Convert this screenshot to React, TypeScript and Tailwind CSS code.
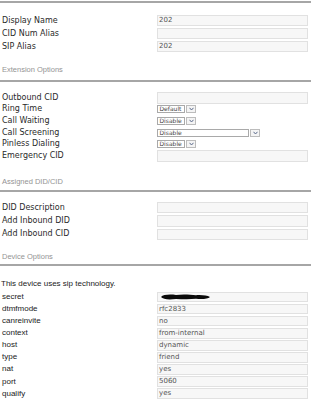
import React from 'react';

// Ligne de séparation grise
const Rule: React.FC<{ className?: string }> = ({ className = '' }) => (
  <div className={`h-[2px] bg-[#a6a6a6] ${className}`} />
);

const Header: React.FC<{ title: string; className: string; ruleClass: string }> = ({ title, className, ruleClass }) => (
  <div className={className}>
    <div className="pl-[2px] h-[10px] leading-[10px] text-[7.5px] text-[#949494] font-['Liberation_Sans',Arial,sans-serif]">
      {title}
    </div>
    <Rule className={ruleClass} />
  </div>
);

const TextBox: React.FC<{ value?: string; children?: React.ReactNode }> = ({ value, children }) => (
  <div className="flex items-center h-full w-[151px] border border-[#e1e1e1] bg-[#f7f7f7] pl-[1px] text-[7px] text-[#555] font-['DejaVu_Sans',Verdana,sans-serif]">
    {value}
    {children}
  </div>
);

const Select: React.FC<{ value: string; wide?: boolean }> = ({ value, wide }) => (
  <div className="flex items-center gap-[1px] h-[8px]">
    <div
      className={`flex items-center h-full overflow-hidden border border-[#a9a9a9] bg-white pl-[1.5px] text-[6px] leading-none text-[#444] font-['DejaVu_Sans',Verdana,sans-serif] ${
        wide ? 'w-[92px]' : 'w-[28px]'
      }`}
    >
      {value}
    </div>
    <div className="flex items-center justify-center h-full w-[10px] border border-[#bcbcbc] bg-[#f4f4f4]">
      <svg width="5" height="4" viewBox="0 0 5 4">
        <path d="M0.5 0.8 L2.5 3 L4.5 0.8" fill="none" stroke="#5a6a8a" strokeWidth="1" />
      </svg>
    </div>
  </div>
);

const Row: React.FC<{ label: string; className: string; arial?: boolean; children: React.ReactNode }> = ({
  label,
  className,
  arial,
  children,
}) => (
  <div className={`flex items-center ${className}`}>
    <div
      className={`w-[157px] shrink-0 pl-[2px] leading-none ${
        arial
          ? "text-[8px] text-[#222] font-['Liberation_Sans',Arial,sans-serif]"
          : "text-[8px] text-[#2a2a2a] font-['DejaVu_Sans',Verdana,sans-serif]"
      }`}
    >
      {label}
    </div>
    <div className="h-full flex items-center">{children}</div>
  </div>
);

const deviceRows: { label: string; value: string }[] = [
  { label: 'dtmfmode', value: 'rfc2833' },
  { label: 'canreinvite', value: 'no' },
  { label: 'context', value: 'from-internal' },
  { label: 'host', value: 'dynamic' },
  { label: 'type', value: 'friend' },
  { label: 'nat', value: 'yes' },
  { label: 'port', value: '5060' },
  { label: 'qualify', value: 'yes' },
];

const App: React.FC = () => {
  return (
    <div className="w-[311px] h-[400px] overflow-hidden bg-white">
      <Rule className="mt-[1px]" />

      {/* Général */}
      <div className="mt-[12px] flex flex-col gap-[2px]">
        <Row label="Display Name" className="h-[11px]">
          <TextBox value="202" />
        </Row>
        <Row label="CID Num Alias" className="h-[11px]">
          <TextBox />
        </Row>
        <Row label="SIP Alias" className="h-[11px]">
          <TextBox value="202" />
        </Row>
      </div>

      <Header title="Extension Options" className="mt-[13px]" ruleClass="mt-[5px]" />

      <div className="mt-[10px] flex flex-col">
        <Row label="Outbound CID" className="h-[11.6px]">
          <TextBox />
        </Row>
        <Row label="Ring Time" className="h-[11.6px]">
          <Select value="Default" />
        </Row>
        <Row label="Call Waiting" className="h-[11.6px]">
          <Select value="Disable" />
        </Row>
        <Row label="Call Screening" className="h-[11.6px]">
          <Select value="Disable" wide />
        </Row>
        <Row label="Pinless Dialing" className="h-[11.6px]">
          <Select value="Disable" />
        </Row>
        <Row label="Emergency CID" className="h-[11.6px]">
          <TextBox />
        </Row>
      </div>

      <Header title="Assigned DID/CID" className="mt-[15.4px]" ruleClass="mt-[3px]" />

      <div className="mt-[10px] flex flex-col gap-[1.8px]">
        <Row label="DID Description" className="h-[11.5px]">
          <TextBox />
        </Row>
        <Row label="Add Inbound DID" className="h-[11.5px]">
          <TextBox />
        </Row>
        <Row label="Add Inbound CID" className="h-[11.5px]">
          <TextBox />
        </Row>
      </div>

      <Header title="Device Options" className="mt-[11.6px]" ruleClass="mt-[2.3px]" />

      <div className="mt-[13px] pl-[1px] h-[10px] leading-[10px] text-[8px] text-[#222] font-['Liberation_Sans',Arial,sans-serif]">
        This device uses sip technology.
      </div>

      <div className="mt-[2.7px] flex flex-col gap-[1.5px]">
        <Row label="secret" className="h-[10.6px]" arial>
          <TextBox>
            <svg width="52" height="8" viewBox="0 0 52 8" className="ml-[1px]">
              <path
                d="M1 4 C3 1.5 10 1 16 2 C22 1 30 1.5 36 2.2 C42 1.8 47 2.5 50 4 C48 6 42 6.5 36 5.8 C30 6.5 22 6.2 16 6 C9 6.8 3 6.5 1 4 Z"
                fill="#0a0a0a"
              />
            </svg>
          </TextBox>
        </Row>
        {deviceRows.map((r) => (
          <Row key={r.label} label={r.label} className="h-[10.6px]" arial>
            <TextBox value={r.value} />
          </Row>
        ))}
      </div>
    </div>
  );
};

export default App;
